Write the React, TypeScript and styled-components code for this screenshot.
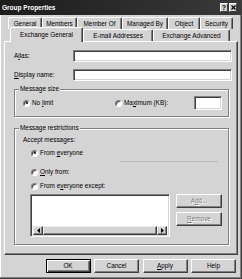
import React from 'react';
import styled, { createGlobalStyle } from 'styled-components';

const FACE = '#d4d4d4';

const Global = createGlobalStyle`
  html, body { margin: 0; padding: 0; background: ${FACE}; }
  body { width: 242px; height: 279px; overflow: hidden; }
  * { box-sizing: border-box; }
`;

const Window = styled.div`
  width: 242px;
  height: 279px;
  background: ${FACE};
  font-family: "Liberation Sans", Arial, sans-serif;
  font-size: 6.4px;
  line-height: 8px;
  color: #000;
  display: flex;
  flex-direction: column;
  border-right: 1px solid #404040;
  border-bottom: 1px solid #404040;
  box-shadow: inset -1px -1px 0 #808080, inset 1px 0 0 #ffffff;
`;

const TitleBar = styled.div`
  flex: none;
  height: 15px;
  display: flex;
  align-items: center;
  justify-content: space-between;
  padding: 0 4px 0 2px;
  background: linear-gradient(90deg, #1c1c1c, #3a3a3a);
  color: #fff;
  font-weight: bold;
  font-size: 6.5px;
`;

const CaptionButtons = styled.div`
  display: flex;
  gap: 1px;
`;

const CaptionButton = styled.div`
  width: 8px;
  height: 9px;
  background: ${FACE};
  border: 1px solid;
  border-color: #fff #404040 #404040 #fff;
  display: flex;
  align-items: center;
  justify-content: center;
  color: #000;
  font-size: 7px;
  font-weight: bold;
  line-height: 1;
`;

const Body = styled.div`
  flex: none;
  padding: 2px 3px 0 4px;
  display: flex;
  flex-direction: column;
`;

const TabRow = styled.div<{ $indent: number }>`
  display: flex;
  align-items: flex-start;
  padding-left: ${p => p.$indent}px;
  height: 12px;
`;

const Tab = styled.div<{ $w: number; $active?: boolean }>`
  position: relative;
  z-index: ${p => (p.$active ? 2 : 0)};
  width: ${p => p.$w}px;
  height: ${p => (p.$active ? 15 : 12)}px;
  margin-top: ${p => (p.$active ? -2 : 0)}px;
  background: ${FACE};
  border-top: 1px solid #fff;
  border-left: 1px solid #fff;
  border-right: 1px solid #404040;
  box-shadow: inset -1px 0 0 #808080;
  border-radius: 2px 2px 0 0;
  display: flex;
  align-items: ${p => (p.$active ? 'flex-start' : 'center')};
  padding-top: ${p => (p.$active ? 3 : 1)}px;
  justify-content: center;
  white-space: nowrap;
`;

const Panel = styled.div`
  height: 214px;
  background: ${FACE};
  border: 1px solid;
  border-color: #fff #404040 #404040 #fff;
  box-shadow: inset -1px -1px 0 #808080;
  padding: 8px 5px 0 9px;
  display: flex;
  flex-direction: column;
`;

const FieldRow = styled.div<{ $gap?: number }>`
  display: flex;
  align-items: center;
  height: 12px;
  margin-top: ${p => p.$gap ?? 0}px;
`;

const FieldLabel = styled.label`
  width: 59px;
  flex: none;
  white-space: nowrap;
`;

const TextBox = styled.div<{ $w?: number; $h?: number }>`
  flex: ${p => (p.$w ? 'none' : '1')};
  width: ${p => (p.$w ? `${p.$w}px` : 'auto')};
  height: ${p => p.$h ?? 12}px;
  background: #fff;
  border: 1px solid;
  border-color: #808080 #fff #fff #808080;
  box-shadow: inset 1px 1px 0 #404040, inset -1px -1px 0 ${FACE};
`;

const GroupBox = styled.div<{ $h: number; $top: number }>`
  position: relative;
  height: ${p => p.$h}px;
  margin-top: ${p => p.$top}px;
  margin-right: 3px;
  border: 1px solid #808080;
  box-shadow: inset 1px 1px 0 #fff, 1px 1px 0 #fff;
`;

const Legend = styled.span`
  position: absolute;
  top: -5px;
  left: 4px;
  padding: 0 1px;
  background: ${FACE};
  line-height: 8px;
  white-space: nowrap;
`;

const SizeRow = styled.div`
  height: 100%;
  display: flex;
  align-items: center;
  padding: 0 6px 0 8px;
`;

const Option = styled.div<{ $w?: number; $indent?: number; $top?: number }>`
  display: flex;
  align-items: center;
  gap: 2px;
  white-space: nowrap;
  height: 8px;
  flex: none;
  width: ${p => (p.$w ? `${p.$w}px` : 'auto')};
  margin-left: ${p => p.$indent ?? 0}px;
  margin-top: ${p => p.$top ?? 0}px;
`;

const Radio = styled.span<{ $checked?: boolean }>`
  position: relative;
  flex: none;
  width: 7px;
  height: 7px;
  border-radius: 50%;
  background: #fff;
  border: 1px solid;
  border-color: #808080 #fff #fff #808080;
  box-shadow: inset 1px 1px 0 #404040;
  &::after {
    content: '';
    display: ${p => (p.$checked ? 'block' : 'none')};
    position: absolute;
    left: 1.5px;
    top: 1.5px;
    width: 2px;
    height: 2px;
    border-radius: 50%;
    background: #000;
  }
`;

const Spacer = styled.div`
  flex: 1;
`;

const Restrictions = styled.div`
  display: flex;
  flex-direction: column;
  padding: 7px 0 0 0;
`;

const Caption = styled.div`
  margin-left: 8px;
  height: 8px;
  white-space: nowrap;
`;

const Separator = styled.div`
  height: 1px;
  margin: 4px 10px 0 105px;
  background: #b8b8b8;
`;

const ListRow = styled.div`
  display: flex;
  margin-top: 4px;
  margin-left: 15px;
  gap: 6px;
`;

const ListBox = styled.div`
  width: 140px;
  height: 43px;
  background: #fff;
  border: 1px solid;
  border-color: #808080 #fff #fff #808080;
  box-shadow: inset 1px 1px 0 #404040, inset -1px -1px 0 ${FACE};
  padding: 2px 2px 1px 2px;
  display: flex;
  flex-direction: column;
  justify-content: flex-end;
`;

const ScrollBar = styled.div`
  height: 9px;
  display: flex;
  background: ${FACE};
`;

const ScrollPart = styled.div<{ $w?: number }>`
  flex: ${p => (p.$w ? 'none' : '1')};
  width: ${p => (p.$w ? `${p.$w}px` : 'auto')};
  height: 9px;
  background: ${FACE};
  border: 1px solid;
  border-color: #ececec #404040 #404040 #ececec;
  box-shadow: inset -1px -1px 0 #808080;
  display: flex;
  align-items: center;
  justify-content: center;
`;

const SideButtons = styled.div`
  display: flex;
  flex-direction: column;
  gap: 4px;
`;

const Button = styled.div<{ $w?: number; $default?: boolean; $disabled?: boolean }>`
  width: ${p => p.$w ?? 46}px;
  height: 14px;
  background: ${FACE};
  border: 1px solid;
  border-color: ${p => (p.$default ? '#000' : '#fff #404040 #404040 #fff')};
  box-shadow: ${p =>
    p.$default
      ? 'inset 1px 1px 0 #fff, inset -1px -1px 0 #404040, inset -2px -2px 0 #808080'
      : 'inset -1px -1px 0 #808080'};
  display: flex;
  align-items: center;
  justify-content: center;
  white-space: nowrap;
  color: ${p => (p.$disabled ? '#808080' : '#000')};
  text-shadow: ${p => (p.$disabled ? '1px 1px 0 #fff' : 'none')};
`;

const ButtonRow = styled.div`
  flex: none;
  display: flex;
  justify-content: flex-end;
  gap: 3.5px;
  margin-top: 4px;
  padding-right: 5px;
`;

const Arrow = ({ dir }: { dir: 'left' | 'right' }) => (
  <svg width="3" height="5" viewBox="0 0 3 5">
    {dir === 'left' ? <path d="M3 0 L0 2.5 L3 5 Z" fill="#000" /> : <path d="M0 0 L3 2.5 L0 5 Z" fill="#000" />}
  </svg>
);

export default function App() {
  return (
    <>
      <Global />
      <Window>
        <TitleBar>
          <span>Group Properties</span>
          <CaptionButtons>
            <CaptionButton>?</CaptionButton>
            <CaptionButton>
              <svg width="5" height="5" viewBox="0 0 5 5">
                <path d="M0.5 0.5 L4.5 4.5 M4.5 0.5 L0.5 4.5" stroke="#000" strokeWidth="1.2" />
              </svg>
            </CaptionButton>
          </CaptionButtons>
        </TitleBar>
        <Body>
          <TabRow $indent={4}>
            <Tab $w={34}>General</Tab>
            <Tab $w={35}>Members</Tab>
            <Tab $w={45}>Member Of</Tab>
            <Tab $w={46}>Managed By</Tab>
            <Tab $w={32}>Object</Tab>
            <Tab $w={33}>Security</Tab>
          </TabRow>
          <TabRow $indent={6}>
            <Tab $w={73} $active>Exchange General</Tab>
            <Tab $w={70}>E-mail Addresses</Tab>
            <Tab $w={77}>Exchange Advanced</Tab>
          </TabRow>
          <Panel>
            <FieldRow>
              <FieldLabel>A<u>l</u>ias:</FieldLabel>
              <TextBox />
            </FieldRow>
            <FieldRow $gap={7}>
              <FieldLabel><u>D</u>isplay name:</FieldLabel>
              <TextBox />
            </FieldRow>
            <GroupBox $h={28} $top={8}>
              <Legend>Message size</Legend>
              <SizeRow>
                <Option $w={92}>
                  <Radio $checked />
                  <span>No <u>l</u>imit</span>
                </Option>
                <Option>
                  <Radio />
                  <span>Ma<u>x</u>imum (KB):</span>
                </Option>
                <Spacer />
                <TextBox $w={28} $h={14} />
              </SizeRow>
            </GroupBox>
            <GroupBox $h={117} $top={11}>
              <Legend>Message restrictions</Legend>
              <Restrictions>
                <Caption>Accept messages:</Caption>
                <Option $indent={16} $top={5}>
                  <Radio $checked />
                  <span>From <u>e</u>veryone</span>
                </Option>
                <Separator />
                <Option $indent={16} $top={6}>
                  <Radio />
                  <span><u>O</u>nly from:</span>
                </Option>
                <Option $indent={16} $top={6}>
                  <Radio />
                  <span>From e<u>v</u>eryone except:</span>
                </Option>
                <ListRow>
                  <ListBox>
                    <ScrollBar>
                      <ScrollPart $w={10}><Arrow dir="left" /></ScrollPart>
                      <ScrollPart />
                      <ScrollPart $w={10}><Arrow dir="right" /></ScrollPart>
                    </ScrollBar>
                  </ListBox>
                  <SideButtons>
                    <Button $w={46} $disabled>A<u>d</u>d...</Button>
                    <Button $w={46} $disabled><u>R</u>emove</Button>
                  </SideButtons>
                </ListRow>
              </Restrictions>
            </GroupBox>
          </Panel>
        </Body>
        <ButtonRow>
          <Button $w={45} $default>OK</Button>
          <Button $w={45}>Cancel</Button>
          <Button $w={45}><u>A</u>pply</Button>
          <Button $w={45}>Help</Button>
        </ButtonRow>
      </Window>
    </>
  );
}
